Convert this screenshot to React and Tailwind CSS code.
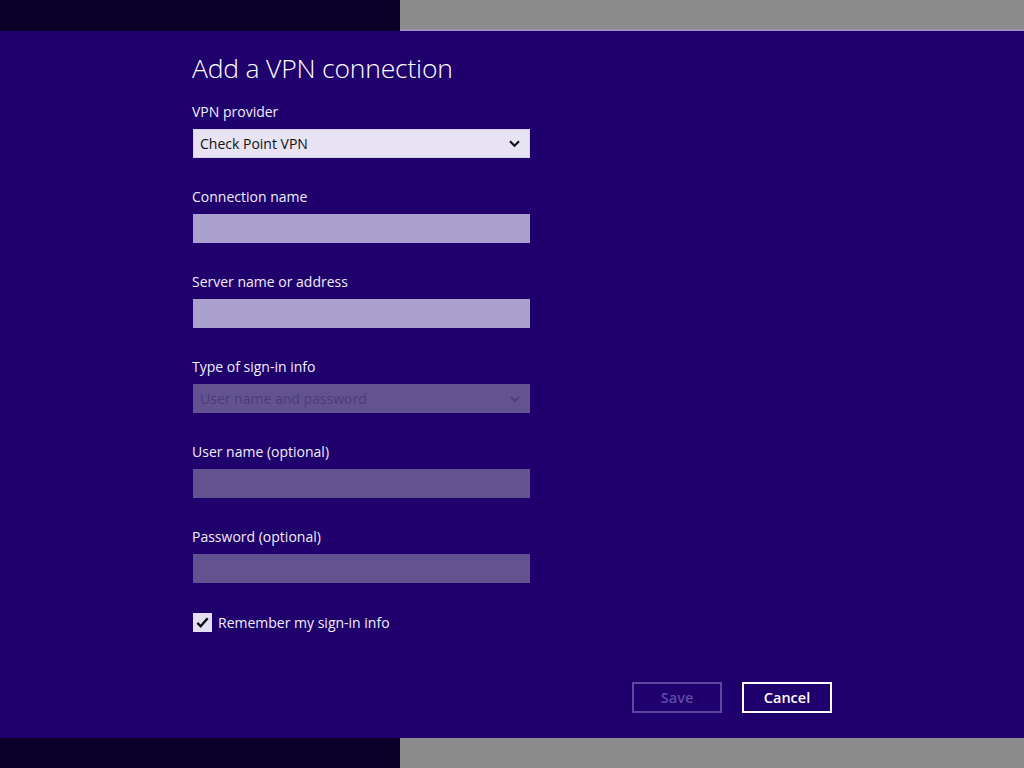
import React from 'react';

const Chevron = ({ className }) => (
  <svg viewBox="0 0 14 10" className={className} fill="none" stroke="currentColor" strokeWidth="2.4">
    <path d="M2 2.5l5 5 5-5" />
  </svg>
);

const Field = ({ label, children }) => (
  <div className="flex flex-col">
    <label className="text-[14px] leading-[20px] text-[#f1eefb] mb-[7px]">{label}</label>
    {children}
  </div>
);

const App = () => {
  return (
    <div
      className="w-[1024px] h-[768px] flex flex-col bg-[#1f006d] overflow-hidden"
      style={{ fontFamily: '"Open Sans", "Noto Sans", sans-serif' }}
    >
      <div className="h-[31px] flex shrink-0">
        <div className="w-[400px] bg-[#0b0029]" />
        <div className="flex-1 bg-[#8b8b8b] border-b-2 border-[#9d90c0]" />
      </div>

      <div className="flex-1 pl-[192px] pr-[192px] pt-[20px]">
        <h1 className="text-[26.5px] font-light leading-[34px] text-white tracking-[-0.2px]">Add a VPN connection</h1>

        <div className="w-[338px] mt-[17px] flex flex-col gap-[29px]">
          <Field label="VPN provider">
            <div className="ml-[1px] h-[29px] bg-[#e7e3f2] border border-[#d6d0ea] flex items-center justify-between pl-[6px] pr-[8px]">
              <span className="text-[14px] text-[#111]">Check Point VPN</span>
              <Chevron className="w-[13px] h-[9px] text-[#111]" />
            </div>
          </Field>

          <Field label="Connection name">
            <div className="ml-[1px] h-[29px] bg-[#aaa1cf]" />
          </Field>

          <Field label="Server name or address">
            <div className="ml-[1px] h-[29px] bg-[#aaa1cf]" />
          </Field>

          <Field label="Type of sign-in info">
            <div className="ml-[1px] h-[29px] bg-[#62528f] flex items-center justify-between pl-[7px] pr-[9px]">
              <span className="text-[14px] text-[#4c3b80]">User name and password</span>
              <Chevron className="w-[12px] h-[8px] text-[#4c3b80]" />
            </div>
          </Field>

          <Field label="User name (optional)">
            <div className="ml-[1px] h-[29px] bg-[#62528f]" />
          </Field>

          <Field label="Password (optional)">
            <div className="ml-[1px] h-[29px] bg-[#62528f]" />
          </Field>
        </div>

        <div className="mt-[30px] ml-[1px] h-[19px] flex items-center gap-[6px]">
          <div className="w-[19px] h-[19px] bg-[#e4e0f2] flex items-center justify-center">
            <svg viewBox="0 0 16 16" className="w-[15px] h-[15px]" fill="none" stroke="#111" strokeWidth="2.6">
              <path d="M2.5 8.5l3.5 3.5 7.5-8.5" />
            </svg>
          </div>
          <span className="text-[14px] leading-[19px] text-[#f1eefb]">Remember my sign-in info</span>
        </div>

        <div className="mt-[50px] flex justify-end gap-[20px]">
          <button className="w-[90px] h-[31px] border-2 border-[#5a48a1] text-[#5e4ca9] text-[14.5px] font-semibold">
            Save
          </button>
          <button className="w-[90px] h-[31px] border-2 border-white text-white text-[14.5px] font-semibold">
            Cancel
          </button>
        </div>
      </div>

      <div className="h-[30px] flex shrink-0">
        <div className="w-[400px] bg-[#0b0029]" />
        <div className="flex-1 bg-[#8b8b8b]" />
      </div>
    </div>
  );
};

export default App;
